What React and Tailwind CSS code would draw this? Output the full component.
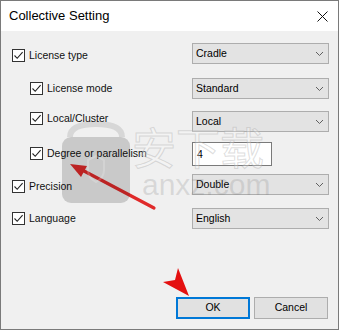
import React from "react";

function Check() {
  return (
    <div className="w-[13px] h-[13px] border border-[#333333] bg-white flex items-center justify-center shrink-0">
      <svg width="11" height="11" viewBox="0 0 11 11">
        <path d="M1.5 5.5 L4.2 8.3 L9.6 2.2" fill="none" stroke="#222" strokeWidth="1.1" />
      </svg>
    </div>
  );
}

function Combo({ value }) {
  return (
    <div className="w-[137px] h-[21px] border border-[#adadad] bg-[#e3e3e3] flex items-center justify-between pl-[3px] pr-[4px]">
      <span className="text-[10.5px] text-black leading-none">{value}</span>
      <svg width="9" height="6" viewBox="0 0 9 6">
        <path d="M1 1 L4.5 4.5 L8 1" fill="none" stroke="#606060" strokeWidth="1" />
      </svg>
    </div>
  );
}

function Row({ indent, label, children, cls, cbTop }) {
  return (
    <div className={"flex " + cls}>
      <div className={"flex-1 flex items-center gap-[4px] self-start " + (indent ? "pl-[18px] " : "") + cbTop}>
        <Check />
        <span className="text-[10.5px] leading-[13px] text-[#111]">{label}</span>
      </div>
      {children}
    </div>
  );
}

export default function App() {
  return (
    <div className="relative w-[340px] h-[331px] bg-white overflow-hidden font-['Liberation_Sans',Arial,sans-serif]">
      <div className="w-[339px] h-[330px] border border-[#7a7a7a] bg-[#f0f0f0] flex flex-col">
        <div className="h-[30px] bg-white flex items-center justify-between pl-[8px] pr-[10px]">
          <span className="text-[13px] text-black">Collective Setting</span>
          <svg width="11" height="11" viewBox="0 0 11 11">
            <path d="M0.5 0.5 L10.5 10.5 M10.5 0.5 L0.5 10.5" stroke="#111" strokeWidth="1" />
          </svg>
        </div>
        <div className="flex-1 flex flex-col pt-[12px] pl-[11px] pr-[9px] pb-[10px]">
          <Row label="License type" cls="h-[21px]" cbTop="mt-[6px]">
            <Combo value="Cradle" />
          </Row>
          <Row indent label="License mode" cls="h-[21px] mt-[14px]" cbTop="mt-[4px]">
            <Combo value="Standard" />
          </Row>
          <Row indent label="Local/Cluster" cls="h-[21px] mt-[12px]" cbTop="mt-[1px]">
            <Combo value="Local" />
          </Row>
          <Row indent label="Degree or parallelism" cls="h-[24px] mt-[10px]" cbTop="mt-[5px]">
            <div className="w-[137px]">
              <div className="w-[80px] h-[24px] border border-[#7a7a7a] bg-white flex items-center pl-[4px]">
                <span className="text-[10.5px] leading-none">4</span>
              </div>
            </div>
          </Row>
          <Row label="Precision" cls="h-[21px] mt-[8px]" cbTop="mt-[6px]">
            <Combo value="Double" />
          </Row>
          <Row label="Language" cls="h-[21px] mt-[13px]" cbTop="mt-[4px]">
            <Combo value="English" />
          </Row>
          <div className="mt-auto flex justify-end gap-[4px] pr-[1px]">
            <button className="w-[74px] h-[22px] border-2 border-[#0078d7] bg-[#e1e1e1] text-[10.5px] text-black">OK</button>
            <button className="w-[74px] h-[22px] border border-[#adadad] bg-[#e1e1e1] text-[10.5px] text-black">Cancel</button>
          </div>
        </div>
      </div>

      {/* red annotation arrows and watermark overlay */}
      <svg className="absolute left-0 top-0 pointer-events-none" width="340" height="331" viewBox="0 0 340 331">
        <line x1="154" y1="208" x2="84" y2="171" stroke="#e02a2a" strokeWidth="3.2" strokeLinecap="round" />
        <polygon points="70,164 87,166 81,177" fill="#e02a2a" />
        <polygon points="189,296 178,268 175,280 163,282" fill="#e41010" />
        <rect x="62" y="137" width="68" height="66" rx="9" fill="rgba(0,0,0,0.16)" />
        <path d="M70 137 Q70 124 96 124 Q122 124 122 137" fill="none" stroke="rgba(0,0,0,0.1)" strokeWidth="6" />
        <path d="M88 160 L96 156 L104 160 L104 170 Q104 178 96 182 Q88 178 88 170 Z" fill="none" stroke="rgba(255,255,255,0.2)" strokeWidth="2" />
      </svg>
      <div className="absolute left-[132px] top-[124px] text-[44px] leading-none font-['Noto_Sans_CJK_SC',sans-serif] text-[rgba(255,255,255,0.25)] [-webkit-text-stroke:1px_rgba(170,170,170,0.4)] pointer-events-none">安下载</div>
      <div className="absolute left-[142px] top-[170px] text-[30px] leading-none text-[rgba(130,130,130,0.22)] pointer-events-none">anxz.com</div>
    </div>
  );
}
